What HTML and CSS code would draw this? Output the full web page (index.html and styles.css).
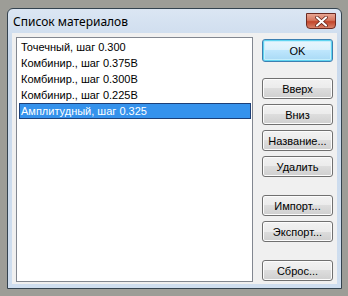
FILE: index.html
```html
<!DOCTYPE html>
<html lang="ru">
<head>
  <meta charset="UTF-8" />
  <title>Список материалов</title>
  <link rel="stylesheet" href="styles.css">
</head>
<body>

  <div class="window">
    <div class="titlebar">
      <span class="title">Список материалов</span>
      <button class="close" aria-label="Закрыть">
        <svg width="13" height="11" viewBox="0 0 13 11">
          <path d="M2 1.5 L11 9.5 M11 1.5 L2 9.5" stroke="#5a1a12" stroke-width="3.6" stroke-linecap="round"/>
          <path d="M2 1.5 L11 9.5 M11 1.5 L2 9.5" stroke="#fff" stroke-width="2.2" stroke-linecap="round"/>
        </svg>
      </button>
    </div>

    <div class="client">
      <ul class="list">
        <li>Точечный, шаг 0.300</li>
        <li>Комбинир., шаг 0.375В</li>
        <li>Комбинир., шаг 0.300В</li>
        <li>Комбинир., шаг 0.225В</li>
        <li class="selected">Амплитудный, шаг 0.325</li>
      </ul>

      <div class="buttons">
        <button class="btn default">OK</button>
        <button class="btn first">Вверх</button>
        <button class="btn">Вниз</button>
        <button class="btn">Название...</button>
        <button class="btn">Удалить</button>
        <button class="btn group">Импорт...</button>
        <button class="btn">Экспорт...</button>
        <button class="btn group">Сброс...</button>
      </div>
    </div>
  </div>

</body>
</html>
```

FILE: styles.css
```css
body {
  margin: 0;
  padding: 8px 0 0 7px;
  background: #9d9d97;
  font-family: 'Liberation Sans', Arial, sans-serif;
  font-size: 11px;
  color: #000;
}

.window {
  width: 335px;
  height: 281px;
  box-sizing: border-box;
  border: 1px solid #34434f;
  border-radius: 6px 6px 0 0;
  background: linear-gradient(#dbe6f3, #c9d9ec 40px, #cfdeef);
  display: flex;
  flex-direction: column;
}

.titlebar {
  height: 24px;
  display: flex;
  align-items: center;
  padding-left: 5px;
}

.title {
  font-family: 'Noto Sans', 'Liberation Sans', sans-serif;
  font-size: 12px;
  color: #000;
}

.close {
  margin: 4px 5px 0 auto;
  align-self: flex-start;
  width: 30px;
  height: 16px;
  padding: 0;
  border: 1px solid #6b2a22;
  border-radius: 0 0 4px 4px;
  background: linear-gradient(#e8a593, #d5765e 45%, #c2452b 55%, #d8826a);
  display: flex;
  align-items: center;
  justify-content: center;
}

.client {
  height: 251px;
  margin: 0 4px 4px 4px;
  box-sizing: border-box;
  padding: 4px 4px 2px 4px;
  background: #f0f0f0;
  border: 1px solid #a8b8cb;
  border-width: 0 0 0 0;
  display: flex;
}

.list {
  width: 237px;
  height: 245px;
  box-sizing: border-box;
  margin: 0;
  padding: 1px 1px 1px 2px;
  list-style: none;
  background: #fff;
  border: 1px solid #828790;
}

.list li {
  height: 16px;
  line-height: 16px;
  padding-left: 2px;
  white-space: nowrap;
}

.list li.selected {
  background: #3592ec;
  color: #fff;
  outline: 1px solid #1c3f78;
  outline-offset: -1px;
}

.buttons {
  margin-left: 9px;
  width: 71px;
  display: flex;
  flex-direction: column;
  gap: 5px;
}

.btn {
  height: 21px;
  padding: 0;
  font-family: 'Liberation Sans', Arial, sans-serif;
  font-size: 11px;
  color: #000;
  border: 1px solid #707070;
  border-radius: 3px;
  background: linear-gradient(#f2f2f2, #ebebeb 50%, #dddddd 50%, #cfcfcf);
  box-shadow: inset 0 0 0 1px #fcfcfc;
}

.btn.default {
  height: 23px;
  margin-top: 2px;
  border-color: #3c7fb1;
  background: linear-gradient(#eaf6fd, #d9f0fc 50%, #bee6fd 50%, #a7d9f5);
  box-shadow: inset 0 0 0 1px #5fd4f0, inset 0 0 0 2px #c6eefc;
}

.btn.first {
  margin-top: 11px;
}

.btn.group {
  margin-top: 13px;
}
```
